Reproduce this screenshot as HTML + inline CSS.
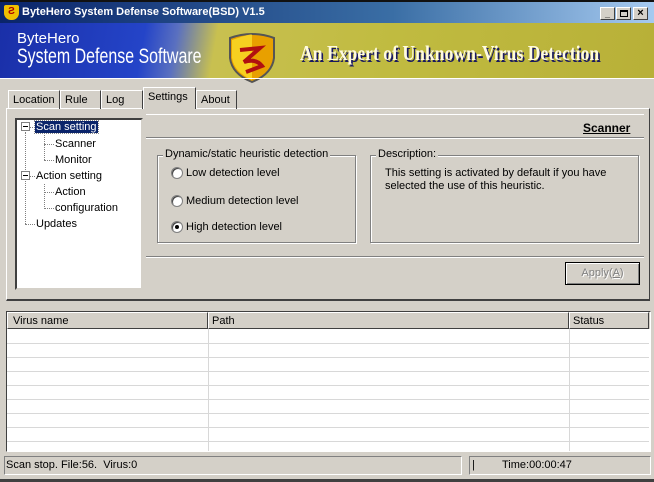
<!DOCTYPE html>
<html><head><style>
*{margin:0;padding:0;box-sizing:border-box}
body{width:654px;height:482px;background:#d4d0c8;font-family:"Liberation Sans",sans-serif;font-size:11px;color:#000;position:relative;overflow:hidden}
.a{position:absolute}
.sunk{border-top:1px solid #808080;border-left:1px solid #808080;border-right:1px solid #fff;border-bottom:1px solid #fff}
.etch{border:1px solid #808080;box-shadow:1px 1px 0 #fff, inset 1px 1px 0 #fff}
.tab{position:absolute;top:90px;height:19px;border:1px solid #fff;border-right:1px solid #404040;border-bottom:none;padding:3px 4px 0 4px;font-size:11px}
.radio{position:absolute;width:12px;height:12px;border-radius:50%;background:#fff;border:1px solid #808080;box-shadow:inset 1px 1px 0 #404040}
.row{position:absolute;left:0;width:642px;height:1px;background:#d8d8d8}
.box{position:absolute;width:9px;height:9px;border:1px solid #808080;background:#fff}
.box:after{content:"";position:absolute;left:1px;top:3px;width:5px;height:1px;background:#000}
</style></head><body>
<div class="a" style="left:0;top:0;width:654px;height:2px;background:#111"></div>
<div class="a" style="left:0;top:2px;width:654px;height:21px;background:linear-gradient(90deg,#0a246a,#3a6ea5 60%,#a6caf0)"></div>
<div class="a" style="left:4px;top:5px;width:15px;height:15px;background:#f0c000;border-radius:2px 2px 7px 7px;color:#a00;font-weight:bold;font-size:10px;text-align:center;line-height:14px">Ƨ</div>
<div class="a" style="left:22px;top:6px;color:#fff;font-weight:bold;font-size:11px;white-space:nowrap">ByteHero System Defense Software(BSD) V1.5</div>
<div class="a" style="left:600px;top:7px;width:15px;height:13px;background:#d4d0c8;border:1px solid #fff;border-right-color:#404040;border-bottom-color:#404040;font-size:9px;text-align:center;font-weight:bold;line-height:12px">_</div>
<div class="a" style="left:616px;top:7px;width:15px;height:13px;background:#d4d0c8;border:1px solid #fff;border-right-color:#404040;border-bottom-color:#404040"><div class="a" style="left:3px;top:2px;width:8px;height:7px;border:1px solid #000;border-top-width:2px"></div></div>
<div class="a" style="left:633px;top:7px;width:15px;height:13px;background:#d4d0c8;border:1px solid #fff;border-right-color:#404040;border-bottom-color:#404040;font-size:11px;text-align:center;font-weight:bold;line-height:11px">×</div>
<div class="a" style="left:0;top:23px;width:654px;height:55px;background:linear-gradient(100deg,#1a2fa8 0%,#2444c8 22%,#5a70c0 27%,#c8c050 33%,#c0bb40 60%,#b8b038 100%)"></div>
<div class="a" style="left:17px;top:30px;color:#fff;font-size:15px;white-space:nowrap">ByteHero</div>
<div class="a" style="left:17px;top:45px;color:#fff;font-size:21px;transform:scaleX(0.76);transform-origin:0 0;white-space:nowrap">System Defense Software</div>
<svg class="a" style="left:226px;top:32px" width="52" height="52" viewBox="0 0 52 52"><path d="M4 6 Q26 -2 48 6 L48 26 Q46 42 26 50 Q6 42 4 26 Z" fill="#e8a000" stroke="#555" stroke-width="2"/><path d="M6 8 Q26 1 26 3 L26 48 Q8 40 6 26Z" fill="#f6d020"/><path d="M14 18 L34 16 L18 30 Q30 26 36 34 L20 40" fill="none" stroke="#b01010" stroke-width="4"/></svg>
<div class="a" style="left:300px;top:41px;color:#fffbe0;font-size:21px;font-weight:bold;font-family:'Liberation Serif',serif;text-shadow:2px 2px 0 #1a1a60;transform:scaleX(0.84);transform-origin:0 0;white-space:nowrap">An Expert of Unknown-Virus Detection</div>
<div class="a" style="left:0;top:78px;width:654px;height:1px;background:#fff"></div>
<!-- tabs -->
<div class="a" style="left:6px;top:108px;width:644px;height:193px;border:1px solid #fff;border-right-color:#404040;border-bottom:2px solid #404040"></div>
<div class="tab" style="left:8px;width:52px">Location</div>
<div class="tab" style="left:60px;width:41px">Rule</div>
<div class="tab" style="left:101px;width:42px">Log</div>
<div class="tab" style="left:143px;top:87px;height:22px;width:53px;background:#d4d0c8;z-index:2">Settings</div>
<div class="tab" style="left:196px;width:41px">About</div>
<!-- tree -->
<div class="a" style="left:15px;top:118px;width:128px;height:172px;background:#fff;border-style:solid;border-width:2px;border-color:#404040 #d4d0c8 #d4d0c8 #404040"></div>
<div class="a" style="left:25px;top:132px;height:92px;border-left:1px dotted #808080"></div>
<div class="a" style="left:44px;top:135px;height:25px;border-left:1px dotted #808080"></div>
<div class="a" style="left:44px;top:184px;height:25px;border-left:1px dotted #808080"></div>
<div class="a" style="left:25px;top:224px;width:10px;border-top:1px dotted #808080"></div>
<div class="a" style="left:44px;top:144px;width:10px;border-top:1px dotted #808080"></div>
<div class="a" style="left:44px;top:160px;width:10px;border-top:1px dotted #808080"></div>
<div class="a" style="left:44px;top:192px;width:10px;border-top:1px dotted #808080"></div>
<div class="a" style="left:44px;top:208px;width:10px;border-top:1px dotted #808080"></div>
<div class="a" style="left:30px;top:127px;width:5px;border-top:1px dotted #808080"></div>
<div class="a" style="left:30px;top:176px;width:5px;border-top:1px dotted #808080"></div>
<div class="box" style="left:21px;top:122px"></div>
<div class="box" style="left:21px;top:171px"></div>
<div class="a" style="left:35px;top:121px;background:#0a246a;color:#fff;padding:0 1px;outline:1px dotted #888">Scan setting</div>
<div class="a" style="left:55px;top:138px">Scanner</div>
<div class="a" style="left:55px;top:154px">Monitor</div>
<div class="a" style="left:36px;top:170px">Action setting</div>
<div class="a" style="left:55px;top:186px">Action</div>
<div class="a" style="left:55px;top:202px">configuration</div>
<div class="a" style="left:36px;top:218px">Updates</div>
<!-- right panel -->
<div class="a" style="left:146px;top:114px;width:498px;height:1px;background:#fff"></div>
<div class="a" style="left:583px;top:121px;font-weight:bold;font-size:12px;text-decoration:underline">Scanner</div>
<div class="a" style="left:146px;top:137px;width:498px;height:1px;background:#808080;box-shadow:0 1px 0 #fff"></div>
<div class="a etch" style="left:157px;top:155px;width:199px;height:88px"></div>
<div class="a" style="left:163px;top:148px;background:#d4d0c8;padding:0 2px">Dynamic/static heuristic detection</div>
<div class="radio" style="left:171px;top:167px"></div><div class="a" style="left:186px;top:167px">Low detection level</div>
<div class="radio" style="left:171px;top:195px"></div><div class="a" style="left:186px;top:195px">Medium detection level</div>
<div class="radio" style="left:171px;top:221px"><div class="a" style="left:3px;top:3px;width:4px;height:4px;background:#000;border-radius:50%"></div></div><div class="a" style="left:186px;top:221px">High detection level</div>
<div class="a etch" style="left:370px;top:155px;width:269px;height:88px"></div>
<div class="a" style="left:376px;top:148px;background:#d4d0c8;padding:0 2px">Description:</div>
<div class="a" style="left:385px;top:167px;line-height:13px;width:250px">This setting is activated by default if you have selected the use of this heuristic.</div>
<div class="a" style="left:146px;top:256px;width:498px;height:1px;background:#808080;box-shadow:0 1px 0 #fff"></div>
<div class="a" style="left:565px;top:262px;width:75px;height:23px;border:1px solid #000;box-shadow:inset 1px 1px 0 #fff,inset -1px -1px 0 #808080;text-align:center;line-height:20px;color:#808080;text-shadow:1px 1px 0 #fff">Apply(<u>A</u>)</div>
<!-- list -->
<div class="a" style="left:6px;top:311px;width:645px;height:141px;background:#fff;border:1px solid #404040;border-right-color:#fff;border-bottom-color:#fff;overflow:hidden">
<div class="a" style="left:0;top:0;width:643px;height:17px;background:#d4d0c8"></div>
<div class="a" style="left:0;top:0;width:201px;height:17px;border:1px solid #fff;border-right-color:#404040;border-bottom-color:#404040;padding:2px 5px">Virus name</div>
<div class="a" style="left:201px;top:0;width:361px;height:17px;border:1px solid #fff;border-right-color:#404040;border-bottom-color:#404040;padding:2px 3px">Path</div>
<div class="a" style="left:562px;top:0;width:80px;height:17px;border:1px solid #fff;border-right-color:#404040;border-bottom-color:#404040;padding:2px 3px">Status</div>
<div class="row" style="top:31px"></div><div class="row" style="top:45px"></div><div class="row" style="top:59px"></div><div class="row" style="top:73px"></div><div class="row" style="top:87px"></div><div class="row" style="top:101px"></div><div class="row" style="top:115px"></div><div class="row" style="top:129px"></div>
<div class="a" style="left:201px;top:17px;width:1px;height:124px;background:#d8d8d8"></div>
<div class="a" style="left:562px;top:17px;width:1px;height:124px;background:#d8d8d8"></div>
</div>
<!-- status -->
<div class="a sunk" style="left:4px;top:456px;width:458px;height:19px"></div>
<div class="a" style="left:6px;top:459px">Scan stop. File:56.&nbsp; Virus:0</div>
<div class="a sunk" style="left:469px;top:456px;width:182px;height:19px"></div>
<div class="a" style="left:472px;top:459px">|</div>
<div class="a" style="left:502px;top:459px">Time:00:00:47</div>
<div class="a" style="left:0;top:479px;width:654px;height:3px;background:#404040"></div>
</body></html>
